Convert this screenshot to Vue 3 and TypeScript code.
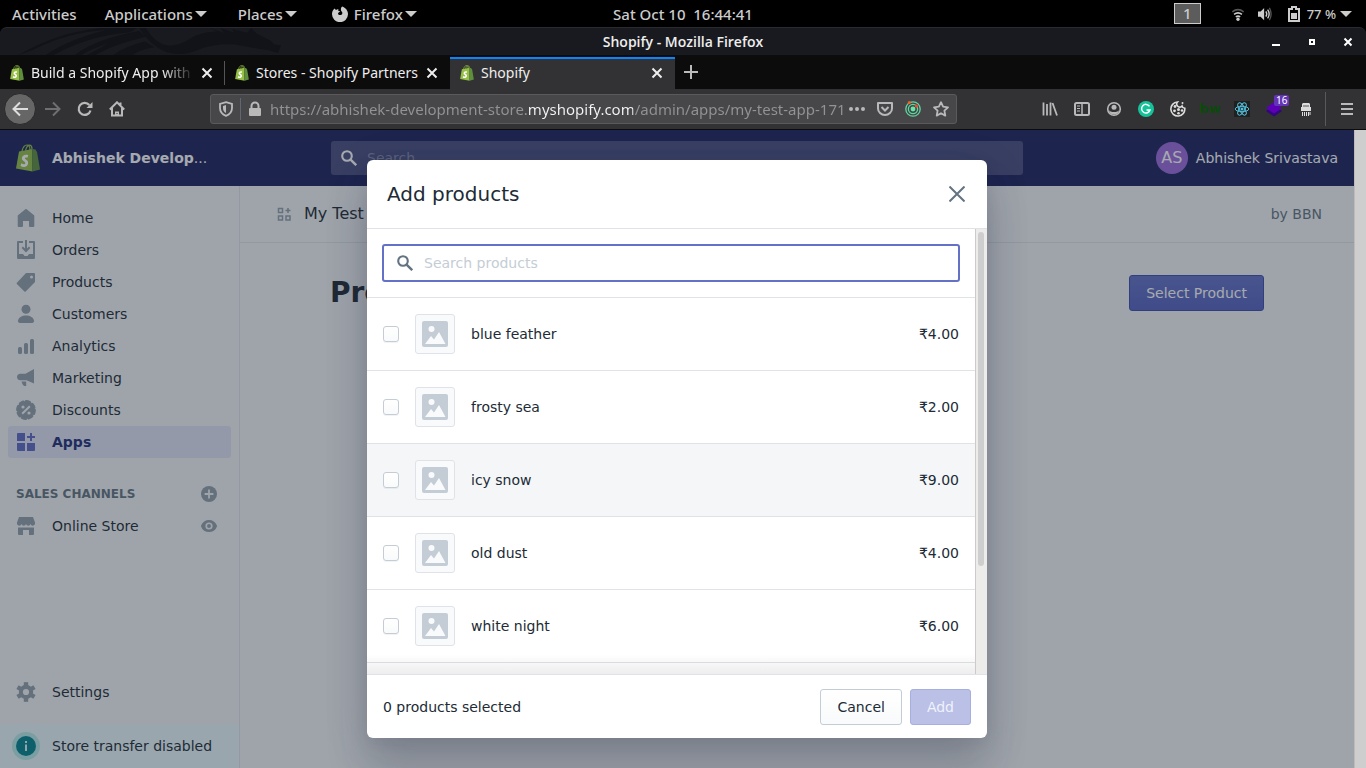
<script setup lang="ts">
import { ref } from 'vue'

interface NavItem {
  label: string
  icon: string
  active?: boolean
}

interface Product {
  name: string
  price: string
  selected: boolean
  hovered?: boolean
}

const navItems: NavItem[] = [
  { label: 'Home', icon: 'home' },
  { label: 'Orders', icon: 'orders' },
  { label: 'Products', icon: 'products' },
  { label: 'Customers', icon: 'customers' },
  { label: 'Analytics', icon: 'analytics' },
  { label: 'Marketing', icon: 'marketing' },
  { label: 'Discounts', icon: 'discounts' },
  { label: 'Apps', icon: 'apps', active: true },
]

const products = ref<Product[]>([
  { name: 'blue feather', price: '₹4.00', selected: false },
  { name: 'frosty sea', price: '₹2.00', selected: false },
  { name: 'icy snow', price: '₹9.00', selected: false, hovered: true },
  { name: 'old dust', price: '₹4.00', selected: false },
  { name: 'white night', price: '₹6.00', selected: false },
])

const tabs = [
  { title: 'Build a Shopify App with N', active: false },
  { title: 'Stores - Shopify Partners', active: false },
  { title: 'Shopify', active: true },
]

const address = ref('https://abhishek-development-store.myshopify.com/admin/apps/my-test-app-171')
const siteQuery = ref('')
const productQuery = ref('')
</script>

<template>
  <svg class="defs" aria-hidden="true">
    <symbol id="shopify-bag" viewBox="0 0 24 28">
      <path d="M6 7C7 3 9 1 11 1c2.500 0 3 2 3 5M9.500 6.500C10.500 3 12.500.8 14 1.200c1.700.4 2 2.300 2 4" fill="none" stroke="#95bf47" stroke-width="1.200" />
      <path d="M3 7.500 16.500 5v22.500L0 24.500z" fill="#95bf47" />
      <path d="m16.500 5 3 .5 1 2 .5.300L24 25.500l-7.500 2z" fill="#5e8e3e" />
      <path d="M12.300 11.300c-3-1.300-6.300.1-6.400 3-.1 2.700 3.500 3 3.400 4.900-.1 1.400-2.300 1.200-4 0l-.7 2.700c2.800 1.900 7.400 1.100 7.500-3 .1-3-3.200-3.400-3.200-4.600 0-1 1.300-1.100 2.500-.5z" fill="#fff" />
    </symbol>
    <symbol id="search" viewBox="0 0 20 20">
      <circle cx="7.500" cy="7.500" r="6" fill="none" stroke="currentColor" stroke-width="2.600" />
      <path d="m12 12 7 7" stroke="currentColor" stroke-width="3" />
    </symbol>
    <symbol id="home" viewBox="0 0 20 20">
      <path d="M10 1a1 1 0 0 0-.7.300L2 7.300a1 1 0 0 0-.3.700v10a1 1 0 0 0 1 1H6a1 1 0 0 0 1-1v-5h6v5a1 1 0 0 0 1 1h3.300a1 1 0 0 0 1-1V8a1 1 0 0 0-.3-.7l-7.300-6A1 1 0 0 0 10 1" fill="currentColor" />
    </symbol>
    <symbol id="orders" viewBox="0 0 20 20">
      <path d="M7 1H2a1 1 0 0 0-1 1v16a1 1 0 0 0 1 1h16a1 1 0 0 0 1-1V2a1 1 0 0 0-1-1h-5v2h4v11h-4l-1.500 2h-3L7 14H3V3h4z" fill="currentColor" />
      <path d="M10 0v10M6.300 7.300 10 11l3.700-3.700" fill="none" stroke="currentColor" stroke-width="2" />
    </symbol>
    <symbol id="products" viewBox="0 0 20 20">
      <path fill-rule="evenodd" d="M10 1h8a1 1 0 0 1 1 1v8L9.700 19.500a1 1 0 0 1-1.300 0L.9 12a1 1 0 0 1 0-1.300zm5.500 2.500a1.500 1.500 0 1 0 0 3 1.500 1.500 0 0 0 0-3" fill="currentColor" />
    </symbol>
    <symbol id="customers" viewBox="0 0 20 20">
      <circle cx="10" cy="5.300" r="4.500" fill="currentColor" />
      <path d="M2 16.500c.5-3 4-5 8-5s7.500 2 8 5c.2 1.500-.5 2.500-2 2.500H4c-1.500 0-2.200-1-2-2.500" fill="currentColor" />
    </symbol>
    <symbol id="analytics" viewBox="0 0 20 20">
      <rect x="2" y="11" width="4" height="7" rx="1.500" fill="currentColor" />
      <rect x="8" y="7" width="4" height="11" rx="1.500" fill="currentColor" />
      <rect x="14" y="3" width="4" height="15" rx="1.500" fill="currentColor" />
    </symbol>
    <symbol id="marketing" viewBox="0 0 20 20">
      <path d="M18 1v14.500l-7.500-3.300H4.200C2.300 12.200 1 10.800 1 9s1.300-3.200 3.200-3.200h5.300zM5.500 13.500h4.700V18H8.500C7.300 18 6 15.500 5.500 13.500" fill="currentColor" />
    </symbol>
    <symbol id="discounts" viewBox="0 0 20 20">
      <circle cx="10" cy="10" r="8.200" fill="currentColor" />
      <circle cx="10" cy="10" r="8.400" fill="none" stroke="currentColor" stroke-width="3" stroke-linecap="round" stroke-dasharray="3.600 2.997" />
      <path d="m6.200 13.800 7.600-7.600" stroke="#f4f6f8" stroke-width="2" />
      <circle cx="7" cy="7" r="1.600" fill="#f4f6f8" /><circle cx="13" cy="13" r="1.600" fill="#f4f6f8" />
    </symbol>
    <symbol id="apps" viewBox="0 0 20 20">
      <path d="M2 1h7v8H1V2a1 1 0 0 1 1-1M1 11h8v8H2a1 1 0 0 1-1-1zm10 0h8v7a1 1 0 0 1-1 1h-7zM14 1h2v3h3v2h-3v3h-2V6h-3V4h3z" fill="currentColor" />
    </symbol>
    <symbol id="store" viewBox="0 0 20 20">
      <path d="M3 1h14l2 5.500a2.300 2.300 0 0 1-4.500 1.500 2.300 2.300 0 0 1-4.500 0 2.300 2.300 0 0 1-4.500 0A2.300 2.300 0 0 1 1 6.500zM2 11.500h16V18a1 1 0 0 1-1 1h-4v-5H7v5H3a1 1 0 0 1-1-1z" fill="currentColor" />
    </symbol>
    <symbol id="eye" viewBox="0 0 20 20">
      <path fill-rule="evenodd" d="M19.900 9.500C18.300 5 14.500 2.500 10 2.500S1.700 5 .1 9.500a1 1 0 0 0 0 1C1.700 15 5.500 17.500 10 17.500s8.300-2.500 9.900-7a1 1 0 0 0 0-1M10 14.500a4.500 4.500 0 1 1 0-9 4.500 4.500 0 0 1 0 9" fill="currentColor" />
      <circle cx="10" cy="10" r="2.400" fill="currentColor" />
    </symbol>
    <symbol id="plus-circle" viewBox="0 0 20 20">
      <circle cx="10" cy="10" r="10" fill="currentColor" /><path d="M10 4.500v11M4.500 10h11" stroke="#f4f6f8" stroke-width="2.200" />
    </symbol>
    <symbol id="gear" viewBox="0 0 20 20">
      <circle cx="10" cy="10" r="7.200" fill="currentColor" />
      <g stroke="currentColor" stroke-width="4.400">
        <path d="M10 .2v19.600" />
        <path d="M10 .2v19.600" transform="rotate(60 10 10)" />
        <path d="M10 .2v19.600" transform="rotate(120 10 10)" />
      </g>
      <circle cx="10" cy="10" r="3.100" fill="#f4f6f8" />
    </symbol>
    <symbol id="close" viewBox="0 0 12 12"><path d="m1.500 1.500 9 9m0-9-9 9" stroke="currentColor" stroke-width="2" /></symbol>
    <symbol id="caret" viewBox="0 0 12 6"><path d="M0 0h12L6 6z" fill="currentColor" /></symbol>
  </svg>

  <div class="desktop">
    <header class="sysbar">
      <div class="sys-left">
        <button class="sys-item activities">Activities</button>
        <button class="sys-item applications">Applications<svg class="caret"><use href="#caret" /></svg></button>
        <button class="sys-item places">Places<svg class="caret"><use href="#caret" /></svg></button>
        <button class="sys-item">
          <svg class="fox" viewBox="0 0 16 16"><path d="M2.500 2.500 4 4c1-.8 2-.8 2.600-.5-.8.6-.4 1.500 1.400 1.600-.3 1-1.600 1.300-2 2.400.2 1.800 2.800 2.200 4 .7.800-1.100.2-2.400-.6-3C8.600 4 8.700 1.700 10.200.6 13.500 1.700 16 4.500 16 8.300A8 8 0 0 1 0 8c0-2 .8-4 2.500-5.500" fill="currentColor" /></svg>
          Firefox<svg class="caret"><use href="#caret" /></svg>
        </button>
      </div>
      <time class="clock">Sat Oct 10&nbsp; 16:44:41</time>
      <div class="sys-right">
        <span class="workspace">1</span>
        <svg class="wifi" viewBox="0 0 16 16"><path d="M1.500 5.500Q8 .5 14.500 5.500" fill="none" stroke="#555" stroke-width="1.800" /><path d="M3.500 8.500Q8 5 12.500 8.500M5.500 11.300Q8 9.500 10.500 11.300" fill="none" stroke="#ccc" stroke-width="1.800" /><circle cx="8" cy="14" r="1.900" fill="#ccc" /></svg>
        <svg class="volume" viewBox="0 0 16 16"><path d="M0 5h3l4-4v14l-4-4H0z" fill="#ccc" /><path d="M9 5q2 3 0 6M11 3q3.500 5 0 10" fill="none" stroke="#ccc" stroke-width="1.600" /><path d="M13 1q4 7 0 14" fill="none" stroke="#555" stroke-width="1.500" /></svg>
        <svg class="battery" viewBox="0 0 12 16"><path d="M1 3h3V1h4v2h3v12H1z" fill="none" stroke="#ccc" stroke-width="2" /><path d="M3 7h6v6H3z" fill="#ccc" /></svg>
        <span class="percent">77 %</span>
        <svg class="caret"><use href="#caret" /></svg>
      </div>
    </header>

    <div class="titlebar">
      <svg class="dragon" viewBox="0 0 290 28"><path d="M14 28Q55 4 100 0h36q-4 4-10 5Q88 8 50 28h-8Q65 12 105 2 65 4 28 23zM72 28q22-17 67-25l7 6Q112 17 94 28h-9l22-12Q90 21 79 28zM139 0h7q9 16 22 18 13 1 24-7 13-8 28-7l-8-4 15 5-4-5 15 5-3-4 16 4 4-5 6 6 14 7 4 4 7 1-3 8-10-3-19-3-16-3q-22-1-39 6-17 7-32 2-17-7-28-25zM112 28q12-9 33-14l10 6q-15 2-23 8z" fill="#121319" /></svg>
      <span class="window-title">Shopify - Mozilla Firefox</span>
      <div class="window-controls">
        <button aria-label="Minimize"><svg viewBox="0 0 10 10"><path d="M1 8h8" stroke="#fff" stroke-width="2" /></svg></button>
        <button aria-label="Restore"><svg viewBox="0 0 10 10"><path d="M3 3h4v4H3z" fill="none" stroke="#fff" stroke-width="2" /></svg></button>
        <button aria-label="Close window"><svg viewBox="0 0 10 10"><path d="m1.500 1.500 7 7m0-7-7 7" stroke="#fff" stroke-width="2" /></svg></button>
      </div>
    </div>

    <div class="tabbar">
      <div v-for="tab in tabs" :key="tab.title" class="tab" :class="{ current: tab.active }">
        <svg class="favicon"><use href="#shopify-bag" /></svg>
        <span class="tab-title">{{ tab.title }}</span>
        <button class="tab-close" aria-label="Close tab"><svg><use href="#close" /></svg></button>
      </div>
      <button class="new-tab" aria-label="New tab"><svg viewBox="0 0 14 14"><path d="M7 0v14M0 7h14" stroke="currentColor" stroke-width="2" /></svg></button>
    </div>

    <div class="toolbar">
      <button class="tool back" aria-label="Back"><svg viewBox="0 0 16 16"><path d="M16 8H2M8 1.500 1.500 8 8 14.500" fill="none" stroke="currentColor" stroke-width="2" /></svg></button>
      <button class="tool forward" aria-label="Forward"><svg viewBox="0 0 16 16"><path d="M0 8h14M8 1.500 14.500 8 8 14.500" fill="none" stroke="currentColor" stroke-width="2" /></svg></button>
      <button class="tool" aria-label="Reload"><svg viewBox="0 0 16 16"><path d="M13.500 9.500A6 6 0 1 1 12.300 4" fill="none" stroke="currentColor" stroke-width="2.200" /><path d="M15.500 1v6h-6z" fill="currentColor" /></svg></button>
      <button class="tool" aria-label="Home page"><svg viewBox="0 0 16 16"><path d="M0.800 8.500 8 1.300l7.200 7.200M3 7v7.500h10V7M11.500 1.500V4" fill="none" stroke="currentColor" stroke-width="2" /><path d="M6 15v-4.500h4V15z" fill="currentColor" /><path d="M7.500 12h1v1h-1z" fill="#323234" /></svg></button>
      <div class="spring"></div>
      <div class="urlbar">
        <svg class="url-icon shield" viewBox="0 0 16 16"><path d="M8 1.200 14 3v4q0 5.500-6 7.800Q2 12.500 2 7V3z" fill="none" stroke="currentColor" stroke-width="1.800" /><path d="M8 4v8q-3-1.500-3-5V5z" fill="currentColor" /></svg>
        <i class="url-divider"></i>
        <svg class="url-icon lock" viewBox="0 0 16 16"><path d="M4.500 8V5a3.500 3.500 0 0 1 7 0v3" fill="none" stroke="currentColor" stroke-width="2" /><rect x="2" y="7" width="12" height="8" rx="1" fill="currentColor" /></svg>
        <input v-model="address" class="url-input" type="text" aria-label="Address" />
        <svg class="url-icon more" viewBox="0 0 16 16"><path d="M0 8a2 2 0 1 0 4 0 2 2 0 1 0-4 0m6 0a2 2 0 1 0 4 0 2 2 0 1 0-4 0m6 0a2 2 0 1 0 4 0 2 2 0 1 0-4 0" fill="currentColor" /></svg>
        <svg class="url-icon" viewBox="0 0 16 16"><path d="M1 2h14v5.500a7 6.500 0 0 1-14 0z" fill="none" stroke="currentColor" stroke-width="2" stroke-linejoin="round" /><path d="m4.500 6 3.500 3.500L11.500 6" fill="none" stroke="currentColor" stroke-width="2" /></svg>
        <svg class="url-icon" viewBox="0 0 16 16"><g fill="none" stroke="#5fd6a0" stroke-width="1.300"><circle cx="8" cy="8" r="7.200" /><circle cx="8" cy="8" r="4.600" /></g><circle cx="8" cy="8" r="2.400" fill="#63e8a5" /><circle cx="4.300" cy="1.600" r="1.500" fill="#ff5a1f" /><circle cx="11.500" cy="5" r="1.600" fill="#ff4433" /></svg>
        <svg class="url-icon" viewBox="0 0 16 16"><path d="m8 1.200 2.100 4.500 4.900.6-3.600 3.400.9 4.900L8 12.200l-4.300 2.400.9-4.900L1 6.300l4.900-.6z" fill="none" stroke="currentColor" stroke-width="1.800" stroke-linejoin="round" /></svg>
      </div>
      <div class="spring"></div>
      <button class="tool" aria-label="Library"><svg viewBox="0 0 16 16"><path d="M1.500 1.500v13M5 3v11.500M8.500 1.500v13M10.500 2 15 14.500" fill="none" stroke="currentColor" stroke-width="1.800" /></svg></button>
      <button class="tool" aria-label="Sidebars"><svg viewBox="0 0 16 16"><rect x="1" y="2" width="14" height="12" rx="1.500" fill="none" stroke="currentColor" stroke-width="2" /><path d="M8 2v12" stroke="currentColor" stroke-width="1.500" /><path d="M3 5h3M3 7.500h3M3 10h3" stroke="currentColor" /></svg></button>
      <button class="tool" aria-label="Account"><svg viewBox="0 0 16 16"><circle cx="8" cy="8" r="6.300" fill="none" stroke="currentColor" stroke-width="1.600" /><circle cx="8" cy="6.300" r="2.500" fill="currentColor" /><path d="M3 9q1 2 5 2t5-2q-.5 4.500-5 4.500T3 9" fill="currentColor" /></svg></button>
      <button class="tool" aria-label="Grammarly"><svg viewBox="0 0 16 16"><circle cx="8" cy="8" r="8" fill="#15c39a" /><path d="M11.500 5.300A4.300 4.300 0 1 0 12 9H8.500" fill="none" stroke="#fff" stroke-width="1.500" /></svg></button>
      <button class="tool" aria-label="Cookies"><svg viewBox="0 0 16 16"><path d="M7.500 1a7 7 0 1 0 7.300 6.200A3 3 0 0 1 12 5a3 3 0 0 1-4.500-4z" fill="none" stroke="#ddd" stroke-width="1.600" /><circle cx="5" cy="5.500" r="1.400" fill="#ddd" /><circle cx="4.500" cy="9.800" r="1.400" fill="#ddd" /><circle cx="8.500" cy="8.500" r="1.500" fill="#ddd" /><circle cx="12" cy="9.500" r="1.300" fill="#ddd" /><circle cx="8.500" cy="12.300" r="1.300" fill="#ddd" /><circle cx="12.500" cy="2" r="1" fill="#ddd" /></svg></button>
      <button class="tool bw">bw</button>
      <button class="tool" aria-label="React"><svg viewBox="0 0 16 16"><path d="M0 0h16v16H0z" fill="#202020" /><g fill="none" stroke="#53c1de"><ellipse cx="8" cy="8" rx="6.800" ry="2.700" /><ellipse cx="8" cy="8" rx="6.800" ry="2.700" transform="rotate(60 8 8)" /><ellipse cx="8" cy="8" rx="6.800" ry="2.700" transform="rotate(120 8 8)" /></g><circle cx="8" cy="8" r="1.500" fill="#53c1de" /></svg></button>
      <button class="tool layers" aria-label="Wappalyzer"><svg viewBox="0 0 16 16"><path d="m0 10 8 5.500 8-5.500-2-1.500H2z" fill="#32067c" /><path d="M0 7 8 1l8 6-8 5.500z" fill="#5b00b5" /></svg><span class="badge">16</span></button>
      <button class="tool" aria-label="Shredder"><svg viewBox="0 0 16 16"><path d="M5 2h6l1 1v3H4V3zM3 6h10v4H3z" fill="#ddd" /><path d="M5 5h6" stroke="#555" /><path d="M4.500 11v4M6.500 11v4M8.500 11v4M10.500 11v4M12 11v3" stroke="#ddd" /></svg></button>
      <i class="tool-divider"></i>
      <button class="tool" aria-label="Menu"><svg viewBox="0 0 16 16"><path d="M2 3h12M2 8h12M2 13h12" stroke="currentColor" stroke-width="2" /></svg></button>
    </div>

    <div class="viewport">
      <div class="page">
        <header class="topbar">
          <a class="brand" href="#"><svg class="brand-logo"><use href="#shopify-bag" /></svg><span><b>Abhishek Develop</b>...</span></a>
          <label class="site-search">
            <svg><use href="#search" /></svg>
            <input v-model="siteQuery" type="text" placeholder="Search" aria-label="Search" />
          </label>
          <button class="user"><span class="avatar">AS</span>Abhishek Srivastava</button>
        </header>

        <div class="workspace-area">
          <nav class="sidebar">
            <a v-for="item in navItems" :key="item.label" class="nav-item" :class="{ active: item.active }" href="#">
              <svg><use :href="'#' + item.icon" /></svg>{{ item.label }}
            </a>
            <div class="channels"><h2>SALES CHANNELS</h2><button aria-label="Add channel"><svg><use href="#plus-circle" /></svg></button></div>
            <div class="channel-row">
              <a class="nav-item" href="#"><svg><use href="#store" /></svg>Online Store</a>
              <button aria-label="View store"><svg><use href="#eye" /></svg></button>
            </div>
            <a class="nav-item settings" href="#"><svg><use href="#gear" /></svg>Settings</a>
            <a class="transfer" href="#">
              <svg viewBox="0 0 28 28"><circle cx="14" cy="14" r="14" fill="#b7ecec" /><circle cx="14" cy="14" r="10" fill="#00848e" /><path d="M13 9h2v2h-2zm0 3.500h2V19h-2z" fill="#e0f5f5" /></svg>
              Store transfer disabled
            </a>
          </nav>

          <main class="main">
            <div class="app-header">
              <svg viewBox="0 0 14 14"><path d="M1.500 1.500h4v4h-4zM1.500 9h4v4h-4zM9 9h4v4H9zM11 1v5M8.500 3.500h5" fill="none" stroke="#919eab" stroke-width="1.500" /></svg>
              <span class="app-name">My Test App</span>
              <span class="vendor">by BBN</span>
            </div>
            <section class="content">
              <h1>Product Reviews</h1>
              <button class="primary">Select Product</button>
            </section>
          </main>
        </div>

        <div class="backdrop">
          <section class="modal" role="dialog" aria-labelledby="modal-title">
            <header class="modal-header">
              <h2 id="modal-title">Add products</h2>
              <button aria-label="Close"><svg viewBox="0 0 16 16"><path d="m0.500.5 15 15m0-15-15 15" stroke="currentColor" stroke-width="2" /></svg></button>
            </header>
            <div class="modal-body">
              <div class="list">
                <div class="search-wrap">
                  <label class="product-search">
                    <svg><use href="#search" /></svg>
                    <input v-model="productQuery" type="text" placeholder="Search products" aria-label="Search products" />
                  </label>
                </div>
                <label v-for="product in products" :key="product.name" class="row" :class="{ hovered: product.hovered }">
                  <input v-model="product.selected" type="checkbox" />
                  <span class="thumb"><svg viewBox="0 0 26 26"><rect width="26" height="26" rx="2" fill="#c4cdd5" /><circle cx="9.500" cy="8" r="3" fill="#f9fafb" /><path d="m3 23 6-8 3 3.500L17 11l6.500 12z" fill="#f9fafb" /></svg></span>
                  <span class="name">{{ product.name }}</span>
                  <span>{{ product.price }}</span>
                </label>
              </div>
              <div class="scroll-track"><div class="scroll-thumb"></div></div>
            </div>
            <footer class="modal-footer">
              <span>{{ products.filter((p) => p.selected).length }} products selected</span>
              <button class="cancel">Cancel</button>
              <button class="add" disabled>Add</button>
            </footer>
          </section>
        </div>
      </div>
      <div class="page-scroll"></div>
    </div>
  </div>
</template>

<style>
body { margin: 0; background: #0c0c0d; }
</style>

<style scoped>
* { box-sizing: border-box; }
button { border: 0; padding: 0; background: none; color: inherit; font: inherit; }
input { font: inherit; min-width: 0; }
a { color: inherit; text-decoration: none; }
h1, h2 { margin: 0; }
.defs { display: none; }
.desktop { display: flex; flex-direction: column; height: 100vh; min-height: 560px; overflow: hidden; background: #000; font: 14px/20px "Noto Sans", sans-serif; color: #ccc; }

.sysbar { flex: none; display: grid; grid-template-columns: 1fr auto 1fr; align-items: center; height: 27px; font-size: 15px; font-weight: 500; }
.sys-left { display: flex; padding-left: 12px; }
.sys-item { display: flex; align-items: center; white-space: nowrap; }
.sys-item .caret { margin-left: 2px; }
.activities { margin-right: 28px; }
.applications { margin-right: 31px; }
.places { margin-right: 35px; }
.caret { width: 12px; height: 6px; }
.fox { width: 16px; height: 16px; margin-right: 6px; }
.clock { white-space: pre; }
.sys-right { display: flex; align-items: center; justify-content: flex-end; padding-right: 14px; }
.workspace { width: 27px; height: 21px; border: 1px solid #ccc; background: #5c5c5c; text-align: center; line-height: 19px; margin-right: 29px; }
.wifi, .volume { width: 16px; height: 14px; margin-right: 11px; }
.battery { width: 12px; height: 16px; margin: 0 7px 0 4px; }
.percent { font-size: 13px; margin-right: 4px; }

.titlebar { flex: none; position: relative; display: grid; grid-template-columns: 1fr auto 1fr; align-items: center; height: 28px; border-top: 1px solid #2a2b31; border-radius: 7px 7px 0 0; background: #191a20; color: #eee; font-family: "Open Sans", "Noto Sans", sans-serif; font-weight: 600; }
.dragon { position: absolute; left: 0; top: 0; width: 290px; height: 27px; }
.window-title { grid-column: 2; }
.window-controls { display: flex; justify-content: flex-end; gap: 26px; padding-right: 13px; }
.window-controls button, .window-controls svg { display: block; width: 10px; height: 10px; }

.tabbar { flex: none; display: flex; height: 34px; padding-top: 2px; background: #0c0c0d; color: #eee; }
.tab { position: relative; display: flex; align-items: center; flex: 0 1 225px; min-width: 0; padding: 0 10px 2px 9px; border-top: 2px solid transparent; }
.tab:first-child::after { content: ""; position: absolute; right: 0; top: 2px; height: 24px; width: 1px; background: #555; }
.tab.current { background: #323234; border-top-color: #0a84ff; }
.favicon { flex: none; width: 16px; height: 16px; margin-right: 6px; }
.tab-title { flex: 1; white-space: nowrap; overflow: hidden; margin-right: 4px; }
.tab:first-child .tab-title { mask-image: linear-gradient(to right, #000 80%, transparent); }
.tab-close { width: 16px; height: 16px; display: grid; place-items: center; }
.tab-close svg { width: 12px; height: 12px; }
.new-tab { width: 32px; padding-bottom: 2px; display: grid; place-items: center; color: #bbb; }
.new-tab svg { width: 14px; height: 14px; }

.toolbar { flex: none; display: flex; align-items: center; height: 41px; padding: 0 3px 0 4px; background: #323234; border-bottom: 1px solid #0c0c0d; color: #b9b9ba; }
.tool { flex: none; position: relative; display: grid; place-items: center; width: 32px; height: 32px; }
.tool svg { width: 16px; height: 16px; }
.back { margin-right: 1px; border-radius: 50%; background: #666667; border: 1px solid #29292a; color: #ddd; }
.forward { color: #6f6f70; }
.spring { flex: 2 1 0; }
.urlbar { flex: 19 1 0; min-width: 0; display: flex; align-items: center; height: 30px; padding: 0 7px; border: 1px solid #5a5a5c; border-radius: 3px; background: #474749; }
.url-icon { flex: none; width: 16px; height: 16px; margin-left: 12px; }
.shield { margin-left: 0; }
.url-divider { width: 1px; height: 22px; margin-left: 6px; background: #626673; }
.lock { margin-left: 6px; }
.more { margin-left: 4px; }
.url-input { flex: 1; height: 24px; margin-left: 7px; padding: 0; border: 0; outline: 0; font-size: 15px; color: transparent; background: linear-gradient(to right, #939394 258px, #f4f4f4 258px, #f4f4f4 363px, #939394 363px); background-clip: text; -webkit-background-clip: text; }
.bw { color: #0a4a0a; font: 700 13px/16px "DejaVu Sans", sans-serif; }
.layers .badge { position: absolute; left: 16px; top: 2px; padding: 0 2px; border-radius: 2px; background: #6333b8; color: #fff; font-size: 10px; line-height: 11px; }
.tool-divider { width: 1px; height: 34px; margin: 0 5px 0 3px; background: #59595a; }

.viewport { flex: 1; min-height: 0; display: flex; font: 14px/20px "DejaVu Sans", sans-serif; color: #212b36; }
.page { flex: 1; min-width: 0; position: relative; display: flex; flex-direction: column; background: #f4f6f8; }
.page-scroll { width: 12px; background: #cecece; border-left: 1px solid #bdbbb9; }
.topbar { flex: none; display: flex; align-items: center; height: 56px; background: #1c2260; color: #fff; }
.brand { flex: none; display: flex; align-items: center; width: 240px; padding-left: 16px; }
.brand-logo { width: 24px; height: 28px; margin-right: 12px; }
.site-search { flex: 1; display: flex; align-items: center; max-width: 692px; height: 34px; margin: 0 auto 0 91px; padding-left: 10px; border-radius: 3px; background: #484d80; }
.site-search svg { width: 16px; height: 16px; margin-right: 10px; }
.site-search input { flex: 1; padding: 0; border: 0; outline: 0; background: none; }
.site-search input::placeholder { color: #8488ab; }
.user { display: flex; align-items: center; gap: 8px; padding-right: 16px; }
.avatar { display: grid; place-items: center; width: 32px; height: 32px; border-radius: 50%; background: #9c6ade; font-size: 16px; }

.workspace-area { flex: 1; min-height: 0; display: flex; }
.sidebar { flex: none; display: flex; flex-direction: column; width: 240px; padding-top: 16px; border-right: 1px solid #dfe3e8; }
.nav-item { display: flex; align-items: center; gap: 16px; height: 32px; margin: 0 8px; padding: 0 8px; border-radius: 3px; }
.nav-item svg { width: 20px; height: 20px; color: #919eab; }
.nav-item.active { background: #dfe3f5; color: #202e78; font-weight: 700; }
.nav-item.active svg { color: #5c6ac4; }
.channels { display: flex; align-items: center; justify-content: space-between; height: 32px; margin: 20px 22px 0 16px; color: #637381; }
.channels h2 { font-size: 12px; line-height: 16px; }
.channels button, .channel-row button { display: grid; color: #919eab; }
.channels button svg, .channel-row button svg { width: 16px; height: 16px; }
.channel-row { display: flex; align-items: center; justify-content: space-between; padding-right: 22px; }
.settings { margin-top: auto; margin-bottom: 16px; }
.transfer { display: flex; align-items: center; gap: 12px; height: 44px; padding-left: 12px; background: #ebf9fc; }
.transfer svg { width: 28px; height: 28px; }

.main { flex: 1; min-width: 0; }
.app-header { display: flex; align-items: center; height: 57px; padding: 0 32px 0 37px; border-bottom: 1px solid #dfe3e8; }
.app-header svg { width: 14px; height: 14px; margin-right: 13px; }
.app-name { flex: 1; font-size: 16px; }
.vendor { color: #637381; }
.content { display: flex; align-items: center; justify-content: space-between; max-width: 998px; margin: 0 auto; padding: 32px; }
.content h1 { font-size: 28px; line-height: 36px; }
.primary { height: 36px; padding: 0 16px; border: 1px solid #3f4eae; border-radius: 3px; background: linear-gradient(#6371c7, #5563c1); color: #fff; }

.backdrop { position: absolute; inset: 0; display: flex; align-items: center; justify-content: center; padding: 30px; background: rgba(33, 43, 54, 0.4); }
.modal { display: flex; flex-direction: column; width: 620px; max-height: 100%; border-radius: 6px; overflow: hidden; background: #fff; box-shadow: 0 31px 41px rgba(32, 42, 53, 0.2), 0 2px 16px rgba(32, 42, 54, 0.08), 0 10px 48px rgba(40, 36, 90, 0.1); }
.modal-header { flex: none; display: flex; align-items: center; justify-content: space-between; height: 69px; padding: 0 22px 0 20px; border-bottom: 1px solid #dfe3e8; }
.modal-header h2 { font-size: 20px; font-weight: 400; line-height: 28px; }
.modal-header button { display: grid; color: #637381; }
.modal-header svg { width: 16px; height: 16px; }
.modal-body { flex: 1; min-height: 0; display: flex; }
.list { position: relative; flex: 1; min-width: 0; padding-bottom: 11px; overflow: hidden; }
.list::after { content: ""; position: absolute; inset: auto 0 0; height: 20px; background: linear-gradient(transparent, rgba(33, 33, 36, 0.08)); }
.search-wrap { padding: 15px; border-bottom: 1px solid #dfe3e8; }
.product-search { display: flex; align-items: center; height: 38px; padding-left: 13px; border: 2px solid #6371c7; border-radius: 3px; }
.product-search svg { width: 16px; height: 16px; margin-right: 11px; color: #637381; }
.product-search input { flex: 1; padding: 0; border: 0; outline: 0; color: #212b36; }
.product-search input::placeholder { color: #c4cdd5; }
.row { display: flex; align-items: center; height: 73px; padding: 0 16px; border-bottom: 1px solid #dfe3e8; }
.row.hovered { background: #f4f6f8; }
.row input { appearance: none; width: 16px; height: 16px; margin: 0 16px 0 0; border: 1px solid #c4cdd5; border-radius: 3px; background: linear-gradient(#fff, #f9fafb); box-shadow: 0 1px 0 rgba(22, 29, 37, 0.05); }
.thumb { display: grid; place-items: center; width: 40px; height: 40px; margin-right: 16px; border: 1px solid #dfe3e8; border-radius: 3px; background: #f9fafb; }
.thumb svg { width: 26px; height: 26px; }
.name { flex: 1; }
.scroll-track { flex: none; width: 12px; padding: 3px 2px; border-left: 1px solid #cdcbc9; background: #eeeceb; }
.scroll-thumb { width: 6px; height: 76%; border-radius: 3px; background: #cecece; }
.modal-footer { flex: none; display: flex; align-items: center; height: 64px; padding: 0 16px; border-top: 1px solid #dfe3e8; }
.modal-footer span { flex: 1; }
.modal-footer button { height: 36px; padding: 0 16px; border: 1px solid #c4cdd5; border-radius: 3px; }
.cancel { margin-right: 8px; background: linear-gradient(#fff, #f9fafb); }
.modal-footer .add { border-color: #a7aee0; background: #bac0e6; color: #f0f2fc; }
</style>
